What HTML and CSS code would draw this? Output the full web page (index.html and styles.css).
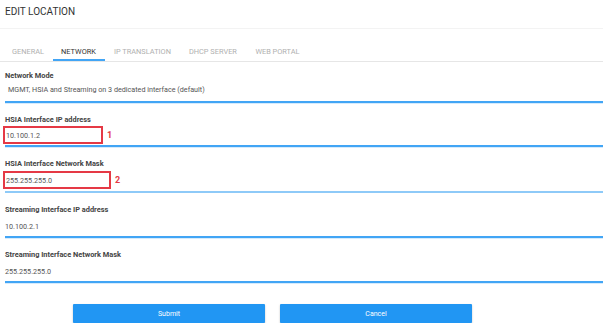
FILE: index.html
```html
<!DOCTYPE html>
<html lang="en">
<head>
  <meta charset="UTF-8">
  <meta name="viewport" content="width=device-width, initial-scale=1.0">
  <title>Edit Location</title>
  <link rel="stylesheet" href="styles.css">
</head>
<body>
  <div class="page">
    <div class="page-title">EDIT LOCATION</div>

    <div class="tabs">
      <div class="tab">GENERAL</div>
      <div class="tab active">NETWORK</div>
      <div class="tab">IP TRANSLATION</div>
      <div class="tab">DHCP SERVER</div>
      <div class="tab">WEB PORTAL</div>
    </div>

    <div class="form">
      <div class="field first">
        <div class="field-label">Network Mode</div>
        <div class="field-value indent">MGMT, HSIA and Streaming on 3 dedicated interface (default)</div>
      </div>

      <div class="field">
        <div class="field-label">HSIA Interface IP address</div>
        <div class="field-row">
          <div class="field-value marked marked-1">10.100.1.2</div>
          <span class="marker">1</span>
        </div>
      </div>

      <div class="field light">
        <div class="field-label">HSIA Interface Network Mask</div>
        <div class="field-row">
          <div class="field-value marked marked-2">255.255.255.0</div>
          <span class="marker">2</span>
        </div>
      </div>

      <div class="field">
        <div class="field-label">Streaming Interface IP address</div>
        <div class="field-value">10.100.2.1</div>
      </div>

      <div class="field">
        <div class="field-label">Streaming Interface Network Mask</div>
        <div class="field-value">255.255.255.0</div>
      </div>
    </div>

    <div class="actions">
      <button class="btn">Submit</button>
      <button class="btn">Cancel</button>
    </div>
  </div>
</body>
</html>
```

FILE: styles.css
```css
/* Reset */
body {
  margin: 0;
  padding: 0;
  font-family: Roboto, 'Liberation Sans', sans-serif;
  background-color: #fff;
  color: #333;
}

.page {
  width: 603px;
}

/* Title */
.page-title {
  font-size: 10px;
  line-height: 12px;
  padding: 6px 0 10px 5px;
  border-bottom: 1px solid #f3f3f3;
  color: #333;
}

/* Tabs */
.tabs {
  display: flex;
  margin-top: 13px;
  padding-left: 3px;
  border-bottom: 1px solid #e6e6e6;
}

.tab {
  font-size: 7.4px;
  line-height: 10px;
  padding: 5px 9px 4px;
  color: #b0b0b0;
}

.tab:nth-child(4) { padding-right: 9.5px; }

.tab.active {
  color: #333;
  padding-left: 8px;
  padding-right: 9px;
  box-shadow: inset 0 -2px 0 #42a5f5;
}

/* Form fields */
.form {
  padding-left: 5px;
}

.field {
  padding-top: 12px;
  border-bottom: 2px solid #42a5f5;
  box-shadow: 0 1px 0 #d6ebfc;
}

.field.light {
  border-bottom-color: #8ecaf8;
  box-shadow: none;
}

.field-label {
  font-size: 7.4px;
  font-weight: bold;
  line-height: 10px;
  color: #444;
}

.field-value {
  font-size: 7.2px;
  line-height: 10px;
  color: #555;
  padding: 7px 0 4px;
}

.field.first {
  padding-top: 9px;
}

.field.first .field-value {
  padding: 4px 0 6px 3px;
}

.field-row {
  display: flex;
  align-items: center;
  margin-left: -2px;
}

.field-value.marked {
  border: 2px solid #e53945;
  padding: 3px 0 1px 1px;
  margin: 1px 0 1px;
  height: 10px;
}

.field.light .field-value.marked {
  margin: 2px 0 2px;
}

.marked-1 { width: 95px; }
.marked-2 { width: 103px; }

.marker {
  color: #e53945;
  font-size: 9px;
  font-weight: bold;
  margin-left: 4px;
}

/* Buttons */
.actions {
  display: flex;
  gap: 15px;
  padding: 21px 0 0 73px;
}

.btn {
  width: 192px;
  height: 19px;
  border: none;
  border-radius: 1px;
  background-color: #2196f3;
  color: #fff;
  font-family: Roboto, 'Liberation Sans', sans-serif;
  font-size: 7px;
  box-shadow: 0 1px 2px rgba(0, 0, 0, 0.25);
  cursor: pointer;
}
```
